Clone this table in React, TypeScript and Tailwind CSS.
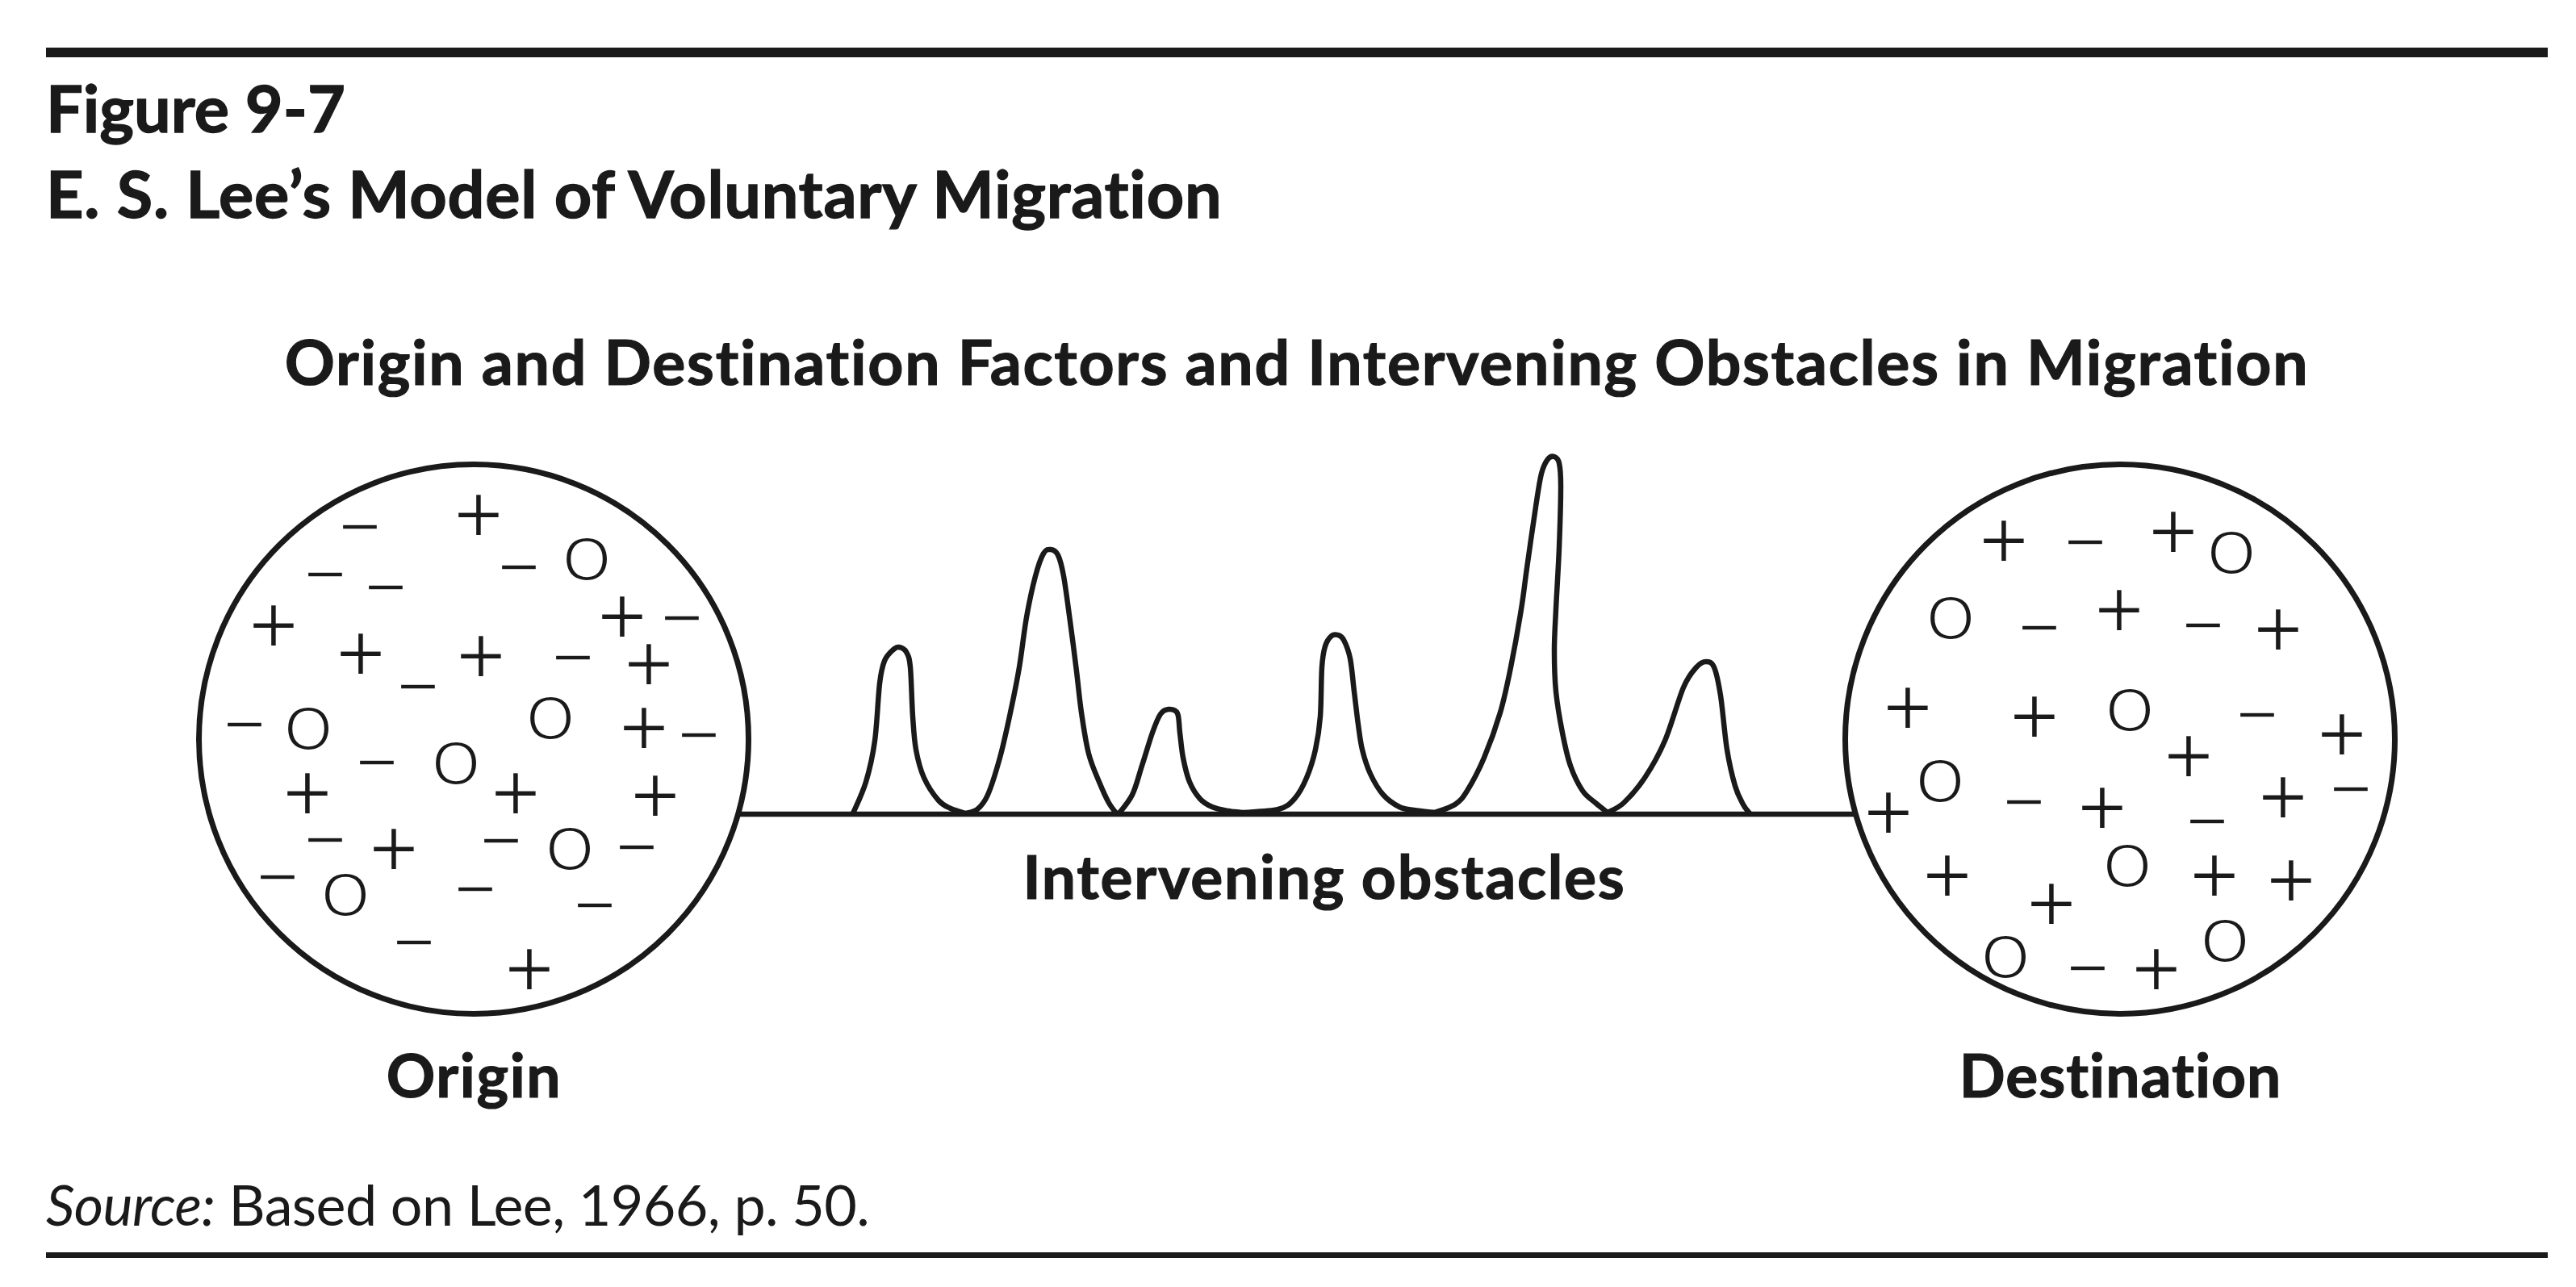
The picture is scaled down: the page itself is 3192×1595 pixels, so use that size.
import React from "react";

type Sym = [string, number, number];

const LEFT: Sym[] = [
  ["-", 446, 651], ["+", 593, 635], ["-", 403, 710], ["-", 478, 726], ["-", 643, 701],
  ["O", 727, 692], ["+", 339, 772], ["+", 771, 761], ["-", 845, 764], ["+", 447, 807],
  ["-", 518, 849], ["+", 596, 810], ["-", 710, 813], ["+", 804, 820], ["-", 303, 896],
  ["O", 382, 902], ["O", 682, 889], ["+", 798, 899], ["-", 866, 909], ["-", 467, 943],
  ["O", 565, 945], ["+", 381, 980], ["+", 639, 980], ["+", 812, 983], ["-", 403, 1039],
  ["+", 488, 1049], ["-", 621, 1040], ["O", 706, 1051], ["-", 789, 1048], ["-", 344, 1085],
  ["O", 428, 1108], ["-", 589, 1100], ["-", 737, 1120], ["-", 513, 1166], ["+", 656, 1198],
];

const RIGHT: Sym[] = [
  ["+", 2483, 667], ["-", 2584, 670], ["+", 2693, 656], ["O", 2765, 684], ["O", 2417, 765],
  ["-", 2527, 776], ["+", 2626, 753], ["-", 2730, 773], ["+", 2823, 777], ["+", 2364, 874],
  ["+", 2521, 885], ["O", 2639, 879], ["-", 2797, 884], ["+", 2902, 907], ["+", 2712, 934],
  ["O", 2404, 967], ["+", 2340, 1004], ["-", 2508, 992], ["+", 2605, 998], ["-", 2735, 1016],
  ["+", 2829, 985], ["-", 2913, 976], ["+", 2413, 1082], ["O", 2636, 1072], ["+", 2744, 1082],
  ["+", 2839, 1088], ["+", 2542, 1117], ["O", 2485, 1185], ["-", 2587, 1198], ["+", 2672, 1198],
  ["O", 2757, 1165],
];

const PEAKS: number[][][] = [
  [[1057, 1008], [1073, 969], [1084, 918], [1090, 847], [1096, 819], [1107, 805], [1114, 802], [1123, 808], [1128, 827], [1131, 888], [1135, 929], [1145, 964], [1163, 992], [1178, 1002], [1196, 1008]],
  [[1196, 1008], [1211, 1003], [1224, 985], [1239, 939], [1252, 883], [1263, 827], [1272, 765], [1283, 714], [1293, 686], [1302, 681], [1311, 688], [1318, 714], [1326, 770], [1334, 832], [1340, 883], [1349, 934], [1362, 969], [1374, 995], [1385, 1010]],
  [[1385, 1010], [1403, 985], [1415, 949], [1428, 908], [1438, 885], [1448, 879], [1459, 884], [1462, 908], [1466, 939], [1474, 969], [1487, 990], [1502, 1000], [1522, 1005], [1540, 1007]],
  [[1540, 1007], [1584, 1003], [1604, 990], [1619, 964], [1630, 929], [1636, 888], [1638, 827], [1642, 801], [1650, 788], [1658, 787], [1665, 793], [1673, 816], [1678, 857], [1683, 898], [1688, 929], [1698, 959], [1714, 985], [1734, 1000], [1752, 1004], [1778, 1007]],
  [[1778, 1007], [1803, 997], [1818, 980], [1839, 939], [1859, 883], [1872, 827], [1885, 755], [1892, 704], [1903, 628], [1910, 587], [1918, 569], [1926, 566], [1932, 574], [1934, 602], [1932, 679], [1928, 755], [1926, 806], [1928, 857], [1936, 908], [1946, 949], [1961, 980], [1977, 995], [1992, 1007]],
  [[1992, 1007], [2012, 995], [2038, 964], [2063, 918], [2086, 852], [2102, 827], [2114, 820], [2124, 827], [2132, 862], [2140, 929], [2150, 974], [2160, 997], [2168, 1008]],
];

function smooth(pts: number[][]): string {
  let d = `M${pts[0][0]},${pts[0][1]}`;
  for (let i = 0; i < pts.length - 1; i++) {
    const p0 = pts[i - 1] || pts[i];
    const p1 = pts[i];
    const p2 = pts[i + 1];
    const p3 = pts[i + 2] || p2;
    const c1x = p1[0] + (p2[0] - p0[0]) / 6;
    const c1y = p1[1] + (p2[1] - p0[1]) / 6;
    const c2x = p2[0] - (p3[0] - p1[0]) / 6;
    const c2y = p2[1] - (p3[1] - p1[1]) / 6;
    d += ` C${c1x.toFixed(1)},${c1y.toFixed(1)} ${c2x.toFixed(1)},${c2y.toFixed(1)} ${p2[0]},${p2[1]}`;
  }
  return d;
}

const INK = "#1a1a1a";
const SYMFONT = "'Liberation Sans', Arial, sans-serif";
const LABFONT = "Lato, 'Open Sans', sans-serif";

function Symbol({ s }: { s: Sym }) {
  const [t, x, y] = s;
  const size = t === "O" ? 76 : t === "+" ? 106 : 90;
  const ch = t === "O" ? "O" : t === "+" ? "+" : "\u2212";
  return (
    <text
      x={x}
      y={y + 0.355 * size}
      fontSize={size}
      fontFamily={SYMFONT}
      textAnchor="middle"
      fill={INK}
      stroke="#ffffff"
      strokeWidth={2}
    >
      {ch}
    </text>
  );
}

function Label({ x, y, spacing, children }: { x: number; y: number; spacing: number; children: React.ReactNode }) {
  return (
    <text
      x={x}
      y={y}
      fontSize={75}
      fontWeight={700}
      fontFamily={LABFONT}
      textAnchor="middle"
      fill={INK}
      stroke={INK}
      strokeWidth={1.2}
      letterSpacing={spacing}
    >
      {children}
    </text>
  );
}

function Diagram() {
  const cy = 916;
  const r = 340.5;
  const ly = 1009;
  const dx = Math.sqrt(r * r - (ly - cy) * (ly - cy));
  return (
    <svg
      className="block w-[3100px] h-[940px]"
      viewBox="57 497 3100 940"
      xmlns="http://www.w3.org/2000/svg"
    >
      <line x1={587 + dx} y1={ly} x2={2627 - dx} y2={ly} stroke={INK} strokeWidth={6.5} />
      {PEAKS.map((p, i) => (
        <path key={i} d={smooth(p)} fill="none" stroke={INK} strokeWidth={6.5} strokeLinejoin="round" />
      ))}
      {LEFT.map((s, i) => (
        <Symbol key={"l" + i} s={s} />
      ))}
      {RIGHT.map((s, i) => (
        <Symbol key={"r" + i} s={s} />
      ))}
      <circle cx={587} cy={cy} r={r} fill="none" stroke={INK} strokeWidth={7} />
      <circle cx={2627} cy={cy} r={r} fill="none" stroke={INK} strokeWidth={7} />
      <Label x={1641} y={1114} spacing={1.7}>
        Intervening obstacles
      </Label>
      <Label x={587.5} y={1360} spacing={1.6}>
        Origin
      </Label>
      <Label x={2627.5} y={1360} spacing={1}>
        Destination
      </Label>
    </svg>
  );
}

export default function App() {
  return (
    <div className="w-[3192px] h-[1595px] bg-white text-[#1a1a1a] font-[Lato,sans-serif] [font-variant-ligatures:none] overflow-hidden">
      <div className="w-[3157px] pl-[57px] pt-[59px]">
        <div className="h-[12px] bg-[#1a1a1a]" />
        <div className="mt-[9px] font-bold text-[81px] leading-[106px] [-webkit-text-stroke:1.3px_#1a1a1a]">
          <h1>Figure 9-7</h1>
          <h2 className="tracking-[0.75px]">E. S. Lee’s Model of Voluntary Migration</h2>
        </div>
        <h3 className="mt-[105px] text-center font-bold text-[77px] leading-[100px] tracking-[1.7px] [-webkit-text-stroke:1.2px_#1a1a1a]">
          Origin and Destination Factors and Intervening Obstacles in Migration
        </h3>
        <Diagram />
        <p className="mt-[5px] text-[70px] leading-[100px] tracking-[-0.6px]">
          <span className="italic">Source:</span> Based on Lee, 1966, p. 50.
        </p>
        <div className="mt-[10px] h-[7px] bg-[#1a1a1a]" />
      </div>
    </div>
  );
}
